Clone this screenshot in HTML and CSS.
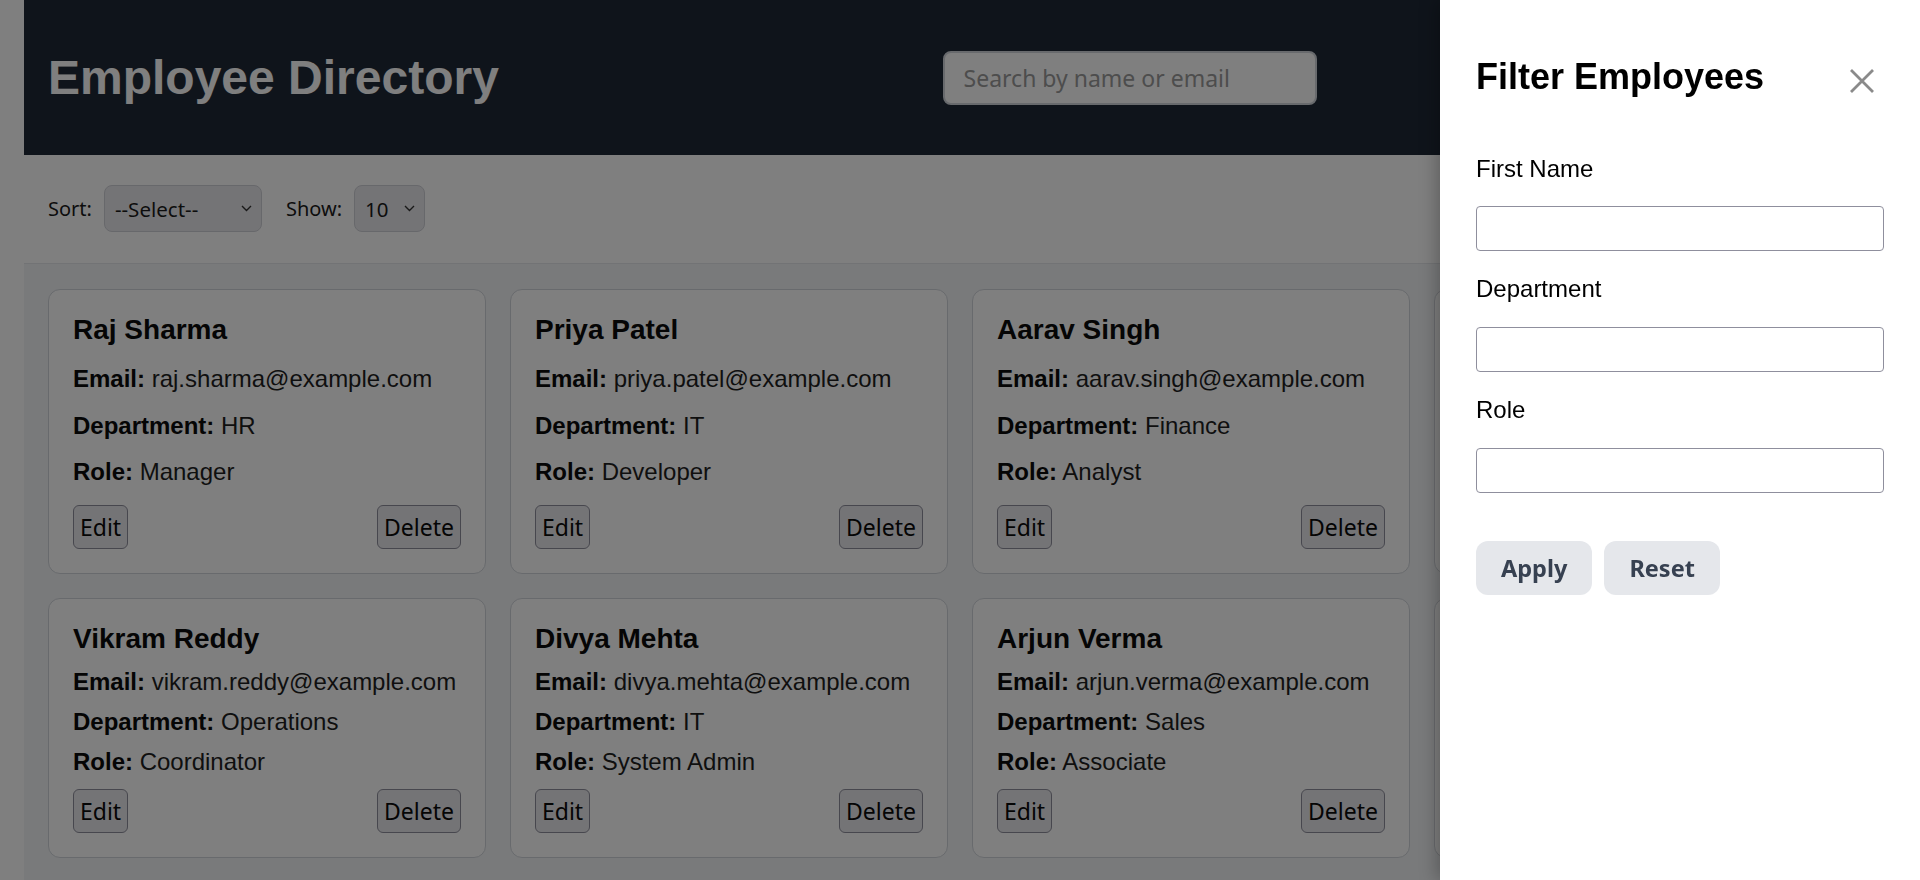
FILE: index.html
```html
<!DOCTYPE html>
<html lang="en">
<head>
<meta charset="utf-8">
<title>Employee Directory</title>
<link rel="stylesheet" href="styles.css">
</head>
<body>
<div class="app">
  <header class="header">
    <h1 class="header-title">Employee Directory</h1>
    <input class="search" type="text" placeholder="Search by name or email">
    <button class="btn-soft" type="button">Filter</button>
  </header>

  <div class="toolbar">
    <div class="toolbar-field">
      <label class="toolbar-label" for="sort">Sort:</label>
      <div class="select-wrap">
        <select id="sort" class="select select-sort">
          <option>--Select--</option>
          <option>First Name</option>
          <option>Department</option>
        </select>
        <svg class="chevron" width="11" height="7" viewBox="0 0 11 7"><path d="M1 1l4.5 4.5L10 1" fill="none" stroke="#333" stroke-width="1.4"/></svg>
      </div>
    </div>
    <div class="toolbar-field">
      <label class="toolbar-label" for="show">Show:</label>
      <div class="select-wrap">
        <select id="show" class="select select-show">
          <option>10</option>
          <option>25</option>
          <option>50</option>
        </select>
        <svg class="chevron" width="11" height="7" viewBox="0 0 11 7"><path d="M1 1l4.5 4.5L10 1" fill="none" stroke="#333" stroke-width="1.4"/></svg>
      </div>
    </div>
  </div>

  <main class="grid">
    <div class="card">
      <h3 class="card-name">Raj Sharma</h3>
      <p class="card-line"><strong>Email:</strong> raj.sharma@example.com</p>
      <p class="card-line"><strong>Department:</strong> HR</p>
      <p class="card-line"><strong>Role:</strong> Manager</p>
      <div class="card-actions"><button class="btn" type="button">Edit</button><button class="btn" type="button">Delete</button></div>
    </div>
    <div class="card">
      <h3 class="card-name">Priya Patel</h3>
      <p class="card-line"><strong>Email:</strong> priya.patel@example.com</p>
      <p class="card-line"><strong>Department:</strong> IT</p>
      <p class="card-line"><strong>Role:</strong> Developer</p>
      <div class="card-actions"><button class="btn" type="button">Edit</button><button class="btn" type="button">Delete</button></div>
    </div>
    <div class="card">
      <h3 class="card-name">Aarav Singh</h3>
      <p class="card-line"><strong>Email:</strong> aarav.singh@example.com</p>
      <p class="card-line"><strong>Department:</strong> Finance</p>
      <p class="card-line"><strong>Role:</strong> Analyst</p>
      <div class="card-actions"><button class="btn" type="button">Edit</button><button class="btn" type="button">Delete</button></div>
    </div>
    <div class="card">
      <h3 class="card-name">Ananya Iyer</h3>
      <p class="card-line"><strong>Email:</strong> ananya.iyer@example.com</p>
      <p class="card-line"><strong>Department:</strong> Marketing</p>
      <p class="card-line"><strong>Role:</strong> Executive</p>
      <div class="card-actions"><button class="btn" type="button">Edit</button><button class="btn" type="button">Delete</button></div>
    </div>

    <div class="card card-compact">
      <h3 class="card-name">Vikram Reddy</h3>
      <p class="card-line"><strong>Email:</strong> vikram.reddy@example.com</p>
      <p class="card-line"><strong>Department:</strong> Operations</p>
      <p class="card-line"><strong>Role:</strong> Coordinator</p>
      <div class="card-actions"><button class="btn" type="button">Edit</button><button class="btn" type="button">Delete</button></div>
    </div>
    <div class="card card-compact">
      <h3 class="card-name">Divya Mehta</h3>
      <p class="card-line"><strong>Email:</strong> divya.mehta@example.com</p>
      <p class="card-line"><strong>Department:</strong> IT</p>
      <p class="card-line"><strong>Role:</strong> System Admin</p>
      <div class="card-actions"><button class="btn" type="button">Edit</button><button class="btn" type="button">Delete</button></div>
    </div>
    <div class="card card-compact">
      <h3 class="card-name">Arjun Verma</h3>
      <p class="card-line"><strong>Email:</strong> arjun.verma@example.com</p>
      <p class="card-line"><strong>Department:</strong> Sales</p>
      <p class="card-line"><strong>Role:</strong> Associate</p>
      <div class="card-actions"><button class="btn" type="button">Edit</button><button class="btn" type="button">Delete</button></div>
    </div>
    <div class="card card-compact">
      <h3 class="card-name">Kavya Nair</h3>
      <p class="card-line"><strong>Email:</strong> kavya.nair@example.com</p>
      <p class="card-line"><strong>Department:</strong> HR</p>
      <p class="card-line"><strong>Role:</strong> Recruiter</p>
      <div class="card-actions"><button class="btn" type="button">Edit</button><button class="btn" type="button">Delete</button></div>
    </div>
  </main>
</div>

<div class="overlay"></div>

<aside class="panel">
  <div class="panel-head">
    <h2 class="panel-title">Filter Employees</h2>
    <button class="close-btn" type="button" aria-label="Close">
      <svg width="26" height="26" viewBox="0 0 26 26"><path d="M2 2L24 24M24 2L2 24" stroke="#8a8a8a" stroke-width="2.8" fill="none"/></svg>
    </button>
  </div>
  <form class="panel-form">
    <div class="field">
      <label class="field-label" for="f-first">First Name</label>
      <input class="field-input" id="f-first" type="text">
    </div>
    <div class="field">
      <label class="field-label" for="f-dept">Department</label>
      <input class="field-input" id="f-dept" type="text">
    </div>
    <div class="field">
      <label class="field-label" for="f-role">Role</label>
      <input class="field-input" id="f-role" type="text">
    </div>
    <div class="panel-actions">
      <button class="btn-soft" type="button">Apply</button>
      <button class="btn-soft" type="button">Reset</button>
    </div>
  </form>
</aside>
</body>
</html>
```

FILE: styles.css
```css
* {
  box-sizing: border-box;
}

html,
body {
  margin: 0;
  padding: 0;
}

body {
  font-family: "Liberation Sans", Arial, sans-serif;
  background: #ffffff;
  color: #222222;
}

.app {
  margin: 0 24px;
}

/* Header */
.header {
  display: flex;
  justify-content: space-between;
  align-items: center;
  padding: 50px 24px;
  background: #1f2937;
}

.header-title {
  margin: 0;
  font-size: 48px;
  line-height: 55px;
  font-weight: 700;
  color: #ffffff;
}

.search {
  width: 374px;
  height: 54px;
  padding: 0 19px;
  border: 2px solid #d1d5db;
  border-radius: 8px;
  background: #ffffff;
  font-family: "Noto Sans", sans-serif;
  font-size: 23px;
  color: #111111;
  outline: none;
}

.search::placeholder {
  color: #9a9a9a;
}

/* Toolbar */
.toolbar {
  display: flex;
  align-items: center;
  gap: 24px;
  padding: 30px 24px 31px;
  background: #ffffff;
  border-bottom: 1px solid #e5e7eb;
}

.toolbar-field {
  display: flex;
  align-items: center;
  gap: 12px;
}

.toolbar-label {
  font-family: "Noto Sans", sans-serif;
  font-size: 20px;
  color: #1a1a1a;
}

.select-wrap {
  position: relative;
  display: flex;
}

.select {
  appearance: none;
  -webkit-appearance: none;
  height: 47px;
  padding: 0 0 0 10px;
  border: 1px solid #cfd0d6;
  border-radius: 8px;
  background: #e9e9ed;
  font-family: "Noto Sans", sans-serif;
  font-size: 20.5px;
  color: #1a1a1a;
}

.select-sort {
  width: 158px;
}

.select-show {
  width: 71px;
}

.chevron {
  position: absolute;
  right: 10px;
  top: 20px;
  pointer-events: none;
}

/* Grid */
.grid {
  display: grid;
  grid-template-columns: repeat(4, 1fr);
  gap: 24px;
  padding: 24.5px 24px 24px;
  background: #f3f4f6;
}

.card {
  background: #ffffff;
  border: 1px solid #d1d5db;
  border-radius: 12px;
  padding: 24px;
}

.card-name {
  margin: 0 0 19.2px;
  font-size: 28px;
  line-height: 1.15;
  font-weight: 700;
  color: #0a0a0a;
}

.card-line {
  margin: 19.2px 0;
  font-size: 24px;
  line-height: 1.15;
  color: #1e1e1e;
}

.card-line strong {
  color: #0a0a0a;
}

.card-actions {
  display: flex;
  justify-content: space-between;
  margin-top: 19.2px;
}

.card-compact .card-name {
  margin-bottom: 12.5px;
}

.card-compact .card-line {
  margin: 12.5px 0;
}

.card-compact .card-actions {
  margin-top: 13.5px;
}

.btn {
  height: 44px;
  padding: 0 6px;
  border: 1px solid #8f8f9d;
  border-radius: 6px;
  background: #e9e9ed;
  font-family: "Noto Sans", sans-serif;
  font-size: 23px;
  color: #0a0a0a;
}

.btn-soft {
  height: 54px;
  padding: 0 25px;
  border: 0;
  border-radius: 12px;
  background: #e5e7eb;
  font-family: "Noto Sans", sans-serif;
  font-size: 23.5px;
  font-weight: 700;
  color: #374151;
}

/* Overlay + panel */
.overlay {
  position: fixed;
  inset: 0;
  background: rgba(0, 0, 0, 0.5);
}

.panel {
  position: fixed;
  top: 0;
  right: 0;
  bottom: 0;
  width: 480px;
  padding: 36px;
  background: #ffffff;
  box-shadow: -4px 0 16px rgba(0, 0, 0, 0.25);
}

.panel-head {
  display: flex;
  justify-content: space-between;
  align-items: flex-start;
  padding-top: 20px;
  margin-bottom: 57.5px;
}

.panel-title {
  margin: 0;
  font-size: 36px;
  line-height: 1.15;
  font-weight: 700;
  color: #000000;
}

.close-btn {
  display: flex;
  justify-content: center;
  width: 44px;
  height: 26px;
  margin-top: 12px;
  padding: 0;
  border: 0;
  background: none;
}

.panel-form {
  margin: 0;
}

.field {
  margin-bottom: 24px;
}

.field-label {
  display: block;
  margin-bottom: 24px;
  font-size: 24px;
  line-height: 1.15;
  color: #000000;
}

.field-input {
  display: block;
  width: 100%;
  height: 45px;
  border: 1px solid #8f8f9d;
  border-radius: 4px;
  background: #ffffff;
}

.panel-actions {
  display: flex;
  gap: 12px;
  margin-top: 48px;
}
```
